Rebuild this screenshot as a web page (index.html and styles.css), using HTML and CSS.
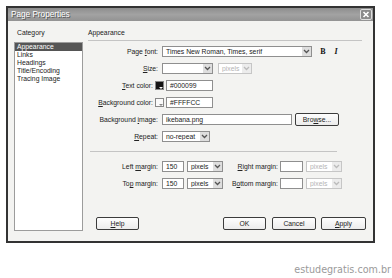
FILE: index.html
```html
<!DOCTYPE html>
<html>
<head>
    <title>Page Properties</title>
    <link rel="stylesheet" href="styles.css">
</head>
<body>

    <div class="dialog">
        <div class="titlebar">
            <span class="title">Page Properties</span>
            <span class="close">
                <svg width="12" height="11" viewBox="0 0 12 11">
                    <path d="M3.5 3 L8.5 8 M8.5 3 L3.5 8" stroke="#fff" stroke-width="1.6"/>
                </svg>
            </span>
        </div>

        <div class="body">
            <div class="category">
                <div class="cat-label">Category</div>
                <ul class="cat-list">
                    <li class="selected">Appearance</li>
                    <li>Links</li>
                    <li>Headings</li>
                    <li>Title/Encoding</li>
                    <li>Tracing Image</li>
                </ul>
            </div>

            <div class="panel">
                <div class="heading">Appearance</div>

                <div class="row">
                    <label class="label">Page <u>f</u>ont:</label>
                    <div class="select font-select">
                        <span class="value">Times New Roman, Times, serif</span>
                        <span class="arrow"><svg width="9" height="9" viewBox="0 0 9 9"><path d="M2 3 L4.5 5.5 L7 3" fill="none" stroke="#555" stroke-width="1.3"/></svg></span>
                    </div>
                    <span class="style-btn bold">B</span>
                    <span class="style-btn italic">I</span>
                </div>

                <div class="row">
                    <label class="label"><u>S</u>ize:</label>
                    <div class="select size-select">
                        <span class="value"></span>
                        <span class="arrow"><svg width="9" height="9" viewBox="0 0 9 9"><path d="M2 3 L4.5 5.5 L7 3" fill="none" stroke="#555" stroke-width="1.3"/></svg></span>
                    </div>
                    <div class="select unit-select disabled">
                        <span class="value">pixels</span>
                        <span class="arrow"><svg width="9" height="9" viewBox="0 0 9 9"><path d="M2 3 L4.5 5.5 L7 3" fill="none" stroke="#bbb" stroke-width="1.3"/></svg></span>
                    </div>
                </div>

                <div class="row">
                    <label class="label color-label"><u>T</u>ext color:</label>
                    <span class="swatch dark"></span>
                    <div class="field color-field">#000099</div>
                </div>

                <div class="row">
                    <label class="label color-label"><u>B</u>ackground color:</label>
                    <span class="swatch light"></span>
                    <div class="field color-field">#FFFFCC</div>
                </div>

                <div class="row">
                    <label class="label">Background <u>i</u>mage:</label>
                    <div class="field image-field">ikebana.png</div>
                    <button class="btn browse">Bro<u>w</u>se...</button>
                </div>

                <div class="row">
                    <label class="label"><u>R</u>epeat:</label>
                    <div class="select repeat-select">
                        <span class="value">no-repeat</span>
                        <span class="arrow"><svg width="9" height="9" viewBox="0 0 9 9"><path d="M2 3 L4.5 5.5 L7 3" fill="none" stroke="#555" stroke-width="1.3"/></svg></span>
                    </div>
                </div>

                <div class="rule"></div>

                <div class="row">
                    <label class="label">Left <u>m</u>argin:</label>
                    <div class="field margin-field">150</div>
                    <div class="select margin-unit">
                        <span class="value">pixels</span>
                        <span class="arrow"><svg width="9" height="9" viewBox="0 0 9 9"><path d="M2 3 L4.5 5.5 L7 3" fill="none" stroke="#555" stroke-width="1.3"/></svg></span>
                    </div>
                    <label class="label right-label"><u>R</u>ight margin:</label>
                    <div class="field margin-field right-field"></div>
                    <div class="select margin-unit disabled">
                        <span class="value">pixels</span>
                        <span class="arrow"><svg width="9" height="9" viewBox="0 0 9 9"><path d="M2 3 L4.5 5.5 L7 3" fill="none" stroke="#bbb" stroke-width="1.3"/></svg></span>
                    </div>
                </div>

                <div class="row">
                    <label class="label">To<u>p</u> margin:</label>
                    <div class="field margin-field">150</div>
                    <div class="select margin-unit">
                        <span class="value">pixels</span>
                        <span class="arrow"><svg width="9" height="9" viewBox="0 0 9 9"><path d="M2 3 L4.5 5.5 L7 3" fill="none" stroke="#555" stroke-width="1.3"/></svg></span>
                    </div>
                    <label class="label right-label">B<u>o</u>ttom margin:</label>
                    <div class="field margin-field right-field"></div>
                    <div class="select margin-unit disabled">
                        <span class="value">pixels</span>
                        <span class="arrow"><svg width="9" height="9" viewBox="0 0 9 9"><path d="M2 3 L4.5 5.5 L7 3" fill="none" stroke="#bbb" stroke-width="1.3"/></svg></span>
                    </div>
                </div>

                <div class="footer">
                    <button class="btn help"><u>H</u>elp</button>
                    <button class="btn ok">OK</button>
                    <button class="btn cancel">Cancel</button>
                    <button class="btn apply"><u>A</u>pply</button>
                </div>
            </div>
        </div>
    </div>

    <div class="watermark">estudegratis.com.br</div>

</body>
</html>
```

FILE: styles.css
```css
body {
    margin: 0;
    background: #fff;
    font-family: "Liberation Sans", Arial, sans-serif;
    font-size: 6.8px;
    color: #222;
}

.dialog {
    box-sizing: border-box;
    width: 369px;
    height: 237px;
    margin: 6px 0 0 6px;
    border: 2px solid #333;
    background: #f3f3f1;
}

.titlebar {
    height: 13px;
    display: flex;
    align-items: center;
    justify-content: space-between;
    padding: 0 1px 0 3px;
    background: linear-gradient(#8e8e8e, #a2a2a2 50%, #939393);
}

.title {
    font-size: 8.2px;
    color: #fff;
    text-shadow: 1px 1px 0 #555;
}

.close {
    display: flex;
    width: 12px;
    height: 11px;
    box-sizing: border-box;
    border: 1px solid #ddd;
    border-radius: 2px;
    background: #8a8a8a;
}

.close svg {
    margin: -1px;
}

.body {
    display: flex;
    gap: 5px;
    padding: 8px 0 0 6px;
}

.category {
    width: 69px;
}

.cat-label {
    line-height: 8px;
    padding-left: 3px;
}

.cat-list {
    list-style: none;
    margin: 5px 0 0;
    padding: 0;
    height: 189px;
    box-sizing: border-box;
    border: 1px solid #9c9c9c;
    background: #fff;
}

.cat-list li {
    line-height: 8px;
    padding-left: 2px;
}

.cat-list .selected {
    background: #555;
    color: #fff;
}

.panel {
    width: 278px;
}

.heading {
    line-height: 8px;
    padding-bottom: 3px;
    margin-right: 4px;
    border-bottom: 1px solid #c4c4c4;
}

.row {
    height: 17px;
    display: flex;
    align-items: center;
}

.row:first-of-type {
    margin-top: 2px;
}

.heading + .row {
    margin-top: 2px;
}

.label {
    width: 70px;
    margin-right: 4px;
    text-align: right;
    white-space: nowrap;
}

.color-label {
    width: 65px;
    margin-right: 2px;
}

.right-label {
    width: 55px;
    margin-right: 2px;
}

.select, .field {
    box-sizing: border-box;
    height: 11px;
    border: 1px solid #8f8f8f;
    background: #fff;
    display: flex;
    align-items: center;
}

.select .value, .field {
    padding-left: 3px;
    white-space: nowrap;
    overflow: hidden;
}

.select .value {
    flex: 1;
}

.arrow {
    width: 9px;
    height: 9px;
    display: flex;
    background: #dedede;
}

.select.disabled {
    border-color: #c6c6c6;
    color: #b4b4b4;
}

.select.disabled .arrow {
    background: #ececec;
}

.font-select {
    width: 150px;
}

.style-btn {
    width: 10px;
    text-align: center;
    font-family: "Liberation Serif", "Times New Roman", serif;
    font-size: 8px;
    font-weight: bold;
    color: #111;
}

.bold {
    margin-left: 6px;
}

.italic {
    margin-left: 3px;
    font-style: italic;
}

.size-select {
    width: 51px;
}

.unit-select {
    width: 34px;
    margin-left: 5px;
}

.swatch {
    position: relative;
    box-sizing: border-box;
    width: 9px;
    height: 9px;
    margin-right: 2px;
    border: 1px solid #888;
}

.swatch.dark {
    background: #151515;
}

.swatch.light {
    background: #fafafa;
}

.swatch::after {
    content: "";
    position: absolute;
    right: 0;
    bottom: 0;
    border-left: 2px solid transparent;
    border-right: 2px solid transparent;
    border-top: 2px solid #888;
}

.swatch.dark::after {
    border-top-color: #fff;
}

.color-field {
    width: 47px;
}

.image-field {
    width: 130px;
}

.btn {
    box-sizing: border-box;
    height: 13px;
    padding: 0;
    border: 1px solid #3c3c3c;
    border-radius: 2px;
    background: linear-gradient(#fdfdfd, #ececec);
    font-family: "Liberation Sans", Arial, sans-serif;
    font-size: 6.8px;
    color: #222;
}

.browse {
    width: 44px;
    margin-left: 3px;
}

.repeat-select {
    width: 48px;
}

.rule {
    margin: 6px 29px 6px 2px;
    border-top: 1px solid #c4c4c4;
}

.margin-field {
    width: 22px;
}

.right-field {
    width: 23px;
}

.margin-unit {
    width: 36px;
    margin-left: 3px;
}

.footer {
    display: flex;
    margin-top: 25px;
}

.help {
    width: 43px;
    margin-left: 8px;
    margin-right: auto;
}

.ok {
    width: 43px;
}

.cancel {
    width: 44px;
    margin-left: 6px;
}

.apply {
    width: 45px;
    margin-left: 5px;
}

.watermark {
    margin-top: 21px;
    padding-right: 1px;
    text-align: right;
    line-height: 12px;
    font-family: "DejaVu Sans", sans-serif;
    font-size: 9.6px;
    color: #9a9a9a;
}
```
